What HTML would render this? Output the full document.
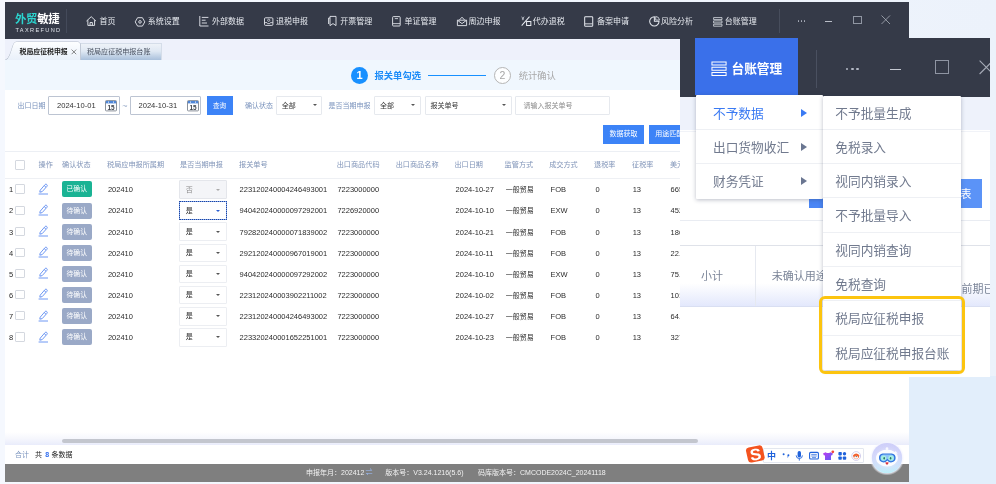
<!DOCTYPE html>
<html lang="zh-CN">
<head>
<meta charset="utf-8">
<title>外贸敏捷 TAXREFUND</title>
<style>
*{box-sizing:border-box;margin:0;padding:0}
html,body{width:996px;height:484px;overflow:hidden}
body{position:relative;background:#e2eefb;font-family:"Liberation Sans","Noto Sans CJK SC",sans-serif;color:#333}
.abs{position:absolute}
svg{overflow:visible}
#bgl{left:0;top:0;width:996px;height:484px;background:linear-gradient(90deg,#f5f8fe 0%,#f0f5fd 60%,#ecf2fb 100%)}
#bgr{left:909px;top:376px;width:87px;height:108px;background:#e2eefb}
#win{left:5px;top:2px;width:904px;height:479.8px;background:#fff;overflow:hidden}
#topbar{left:0;top:0;width:904px;height:37.5px;background:#353a48}
.nav{position:absolute;top:0;height:37px;line-height:40.4px;font-size:8px;color:#e6e9ef;white-space:nowrap}
.nav svg{position:absolute;top:13px}
#logo1{left:10px;top:10px;font-size:11.4px;font-weight:bold;line-height:14px;white-space:nowrap;letter-spacing:-0.3px}
#logo2{left:10.5px;top:24.5px;font-size:5.6px;color:#dfe3ea;letter-spacing:1.35px;line-height:7px;white-space:nowrap}
#tabbar{left:0;top:37px;width:904px;height:21px;background:#eef1fb}
#stepbar{left:0;top:57.5px;width:904px;height:30.5px;background:#f0f7fe}
.t7{font-size:7px;white-space:nowrap;line-height:10px}
.lbl{color:#7a93bd}
.inp{position:absolute;top:93.5px;height:19.5px;border:1px solid #e6e9ee;background:#fff;border-radius:1px;font-size:7.55px;line-height:17.8px;color:#333;white-space:nowrap}
.btn{position:absolute;background:#3c83f7;color:#fff;font-size:7px;text-align:center;white-space:nowrap}
.caret{position:absolute;width:0;height:0;border-left:2px solid transparent;border-right:2px solid transparent;border-top:2.6px solid #555}
.th{position:absolute;top:157.5px;font-size:7.15px;line-height:10px;color:#8094b8;white-space:nowrap}
.row{position:absolute;left:0;width:904px;height:21px}
.row span,.row div,.row svg{position:absolute;white-space:nowrap}
.cell{top:6.5px;font-size:7.5px;line-height:10px;color:#2b2b2b}
.cb{width:9.5px;height:9.5px;border:1px solid #d4d8df;background:#fff;border-radius:1px}
.tag{left:57px;top:2.6px;width:29.5px;height:16px;border-radius:2px;color:#fff;font-size:6.8px;line-height:16px;text-align:center}
.sel{left:174.3px;top:1.4px;width:47.7px;height:18.8px;border:1px solid #eceef2;background:#fff;border-radius:1px}
</style>
</head>
<body>
<div id="root" class="abs" style="left:0;top:0;width:996px;height:484px;will-change:transform">
<div id="bgl" class="abs"></div>
<div id="bgr" class="abs"></div>
<div id="win" class="abs">
  <div id="topbar" class="abs">
    <div id="logo1" class="abs"><span style="color:#2bd4cf">外贸</span><span style="color:#fff">敏捷</span></div>
    <div id="logo2" class="abs">TAXREFUND</div>
    <div class="abs" style="left:61px;top:7px;width:1px;height:24px;background:#444a5a"></div>
    <svg class="abs" style="left:81.4px;top:14.2px" width="11.6" height="11.6" viewBox="0 0 10 10"><path d="M0.4 4.4 L4.5 0.6 L8.6 4.4 M1.6 3.6 V8.1 H7.4 V3.6 M3.5 8.1 V5.6 H5.5 V8.1" fill="none" stroke="#e6e9ef" stroke-width="0.8"/></svg><div class="nav" style="left:94.6px">首页</div>
    <svg class="abs" style="left:130px;top:15px" width="10" height="10" viewBox="0 0 10 10"><path d="M2.6 0.7 H7.4 L9.8 4.9 L7.4 9.1 H2.6 L0.2 4.9 Z" fill="none" stroke="#e6e9ef" stroke-width="0.9" stroke-linejoin="round"/><circle cx="5" cy="4.9" r="1.3" fill="none" stroke="#e6e9ef" stroke-width="0.9"/></svg><div class="nav" style="left:142.8px">系统设置</div>
    <svg class="abs" style="left:194px;top:15px" width="10" height="10" viewBox="0 0 10 10"><path d="M0.8 -1 V9 H9.5 M2.8 0.4 H9.4 M2.8 3.2 H6.6 M2.8 6 H8" fill="none" stroke="#e6e9ef" stroke-width="0.9"/></svg><div class="nav" style="left:207px">外部数据</div>
    <svg class="abs" style="left:259px;top:15px" width="10" height="10" viewBox="0 0 10 10"><rect x="0.5" y="0.8" width="8.4" height="7.6" rx="1" fill="none" stroke="#e6e9ef" stroke-width="0.9"/><path d="M0.6 5.6 H3 L3.6 6.6 H5.8 L6.4 5.6 H8.8" fill="none" stroke="#e6e9ef" stroke-width="0.8"/><circle cx="4.7" cy="3.3" r="1.1" fill="none" stroke="#e6e9ef" stroke-width="0.7"/></svg><div class="nav" style="left:271px">退税申报</div>
    <svg class="abs" style="left:323px;top:15px" width="10" height="10" viewBox="0 0 10 10"><path d="M2 -0.6 H8 V8.6 L5 6.6 L2 8.6 Z M2 1 H0.6 V7" fill="none" stroke="#e6e9ef" stroke-width="0.9" stroke-linejoin="round"/></svg><div class="nav" style="left:335.2px">开票管理</div>
    <svg class="abs" style="left:388px;top:15px" width="10" height="10" viewBox="0 0 10 10"><rect x="-0.4" y="-0.4" width="7.6" height="9.4" rx="0.8" fill="none" stroke="#e6e9ef" stroke-width="0.9"/><path d="M-0.2 6.6 H7 M1.8 1.6 H5" fill="none" stroke="#e6e9ef" stroke-width="0.8"/></svg><div class="nav" style="left:399.5px">单证管理</div>
    <svg class="abs" style="left:451.5px;top:15px" width="10" height="10" viewBox="0 0 10 10"><path d="M0.4 3.2 H9.6 V8.6 H0.4 Z M0.6 3.4 L5 6.6 L9.4 3.4 M2.4 3 L5 0.2 L7.6 3" fill="none" stroke="#e6e9ef" stroke-width="0.9" stroke-linejoin="round"/></svg><div class="nav" style="left:463.5px">周边申报</div>
    <svg class="abs" style="left:515.6px;top:13.8px" width="11.2" height="11.2" viewBox="0 0 10 10"><path d="M0.6 8.6 L7.6 0.6 M5 8.6 H8.8 V5 H5 Z" fill="none" stroke="#e6e9ef" stroke-width="0.9"/><path d="M0.6 0.6 L1.7 2.2 L2.8 0.6 M1.7 2.2 V3.8 M0.8 2.6 H2.6" fill="none" stroke="#e6e9ef" stroke-width="0.6"/></svg><div class="nav" style="left:527.7px">代办退税</div>
    <svg class="abs" style="left:579.3000000000001px;top:13.8px" width="11.2" height="11.2" viewBox="0 0 10 10"><rect x="0.6" y="0.6" width="7.2" height="8.6" rx="0.8" fill="none" stroke="#e6e9ef" stroke-width="0.9"/><path d="M0.8 7 H7.6" stroke="#e6e9ef" stroke-width="0.8"/></svg><div class="nav" style="left:592px">备案申请</div>
    <svg class="abs" style="left:643.6px;top:13.8px" width="11.2" height="11.2" viewBox="0 0 10 10"><path d="M4.8 0.6 A4.2 4.2 0 1 0 9 4.8 H4.8 Z" fill="none" stroke="#e6e9ef" stroke-width="0.9"/><path d="M6 0.4 A3.6 3.6 0 0 1 9.4 3.6 H6 Z" fill="none" stroke="#e6e9ef" stroke-width="0.7"/></svg><div class="nav" style="left:656px">风险分析</div>
    <svg class="abs" style="left:707.5px;top:15px" width="10" height="10" viewBox="0 0 10 10"><path d="M0.6 0.6 H9 V2.6 H0.6 Z M0.6 3.9 H9 V5.9 H0.6 Z M0.6 7.2 H9 V9.2 H0.6 Z" fill="none" stroke="#e6e9ef" stroke-width="0.75"/></svg><div class="nav" style="left:719.7px">台账管理</div>
    <div class="abs" style="left:773.5px;top:7px;width:1px;height:24px;background:#474d5c"></div>
    <div class="abs" style="left:792.5px;top:18.3px;width:8px;height:2px"><i class="abs" style="left:0;top:0;width:1.4px;height:1.4px;background:#aeb3bf;border-radius:50%"></i><i class="abs" style="left:3px;top:0;width:1.4px;height:1.4px;background:#aeb3bf;border-radius:50%"></i><i class="abs" style="left:6px;top:0;width:1.4px;height:1.4px;background:#aeb3bf;border-radius:50%"></i></div>
    <div class="abs" style="left:819.7px;top:19.2px;width:7px;height:1px;background:#b9bdc7"></div>
    <div class="abs" style="left:848px;top:13.5px;width:8.6px;height:8.6px;border:1px solid #9096a3"></div>
    <svg class="abs" style="left:875.5px;top:13.3px" width="10" height="10" viewBox="0 0 10 10"><path d="M0.5 0.5 L9 9 M9 0.5 L0.5 9" stroke="#a9aeb9" stroke-width="0.8" fill="none"/></svg>
  </div>
  <div id="tabbar" class="abs">
    <div class="abs" style="left:75px;top:3.5px;width:82px;height:17.5px;background:linear-gradient(180deg,#eef2f8 0%,#dfe8f3 45%,#a9c0db 100%);border:1px solid #d5dde9;border-bottom:none"></div>
    <div class="abs t7" style="left:82px;top:7.5px;color:#4a5261;font-size:7.05px">税局应征税申报台账</div>
    <svg class="abs" style="left:0;top:2px" width="80" height="19" viewBox="0 0 80 19"><path d="M0.5 19 C5 17 6 10 8.5 3.5 C9.3 1.5 10.5 1 12.5 1 H72.5 C74 1 75 2 75 3.5 V19 Z" fill="#f2f6fc" stroke="#a5aebd" stroke-width="0.8"/><path d="M1 19 C5 17 6 10 8.5 3.5 C9.3 1.5 10.5 1 12.5 1 H72.5 C74 1 75 2 75 3.5 V19 Z" fill="url(#tg)" stroke="none"/><defs><linearGradient id="tg" x1="0" y1="0" x2="0" y2="1"><stop offset="0" stop-color="#fdfeff"/><stop offset="1" stop-color="#e9f0fa"/></linearGradient></defs></svg>
    <div class="abs t7" style="left:14.5px;top:7.5px;color:#222;font-weight:bold;font-size:6.9px">税局应征税申报</div>
    <svg class="abs" style="left:65.5px;top:9.5px" width="6" height="6" viewBox="0 0 6 6"><path d="M0.6 0.6 L5.2 5.2 M5.2 0.6 L0.6 5.2" stroke="#555" stroke-width="0.7"/></svg>
  </div>
  <div id="stepbar" class="abs">
    <div class="abs" style="left:346px;top:7px;width:17px;height:17px;border-radius:50%;background:#1890ff;color:#fff;font-size:11px;font-weight:bold;line-height:17.5px;text-align:center">1</div>
    <div class="abs" style="left:369.5px;top:10.3px;font-size:9.3px;line-height:13px;font-weight:bold;color:#1d8cf8;white-space:nowrap">报关单勾选</div>
    <div class="abs" style="left:423px;top:15px;width:57.5px;height:1px;background:#1890ff"></div>
    <div class="abs" style="left:489px;top:7px;width:17px;height:17px;border-radius:50%;border:1px solid #b5b5b5;color:#a5a5a5;font-size:10.5px;line-height:15.5px;text-align:center;background:#fdfeff">2</div>
    <div class="abs" style="left:513.7px;top:10.3px;font-size:9.3px;line-height:13px;color:#a8a8a8;white-space:nowrap">统计确认</div>
  </div>
  <div class="abs t7 lbl" style="left:12.4px;top:99.4px">出口日期</div>
  <div class="inp" style="left:43px;width:71.5px;border-color:#bcc4d2"><span class="abs" style="left:8px;top:0">2024-10-01</span><svg class="abs" style="left:55.6px;top:3.2px" width="12" height="11.4" viewBox="0 0 12 11.4"><rect x="0.5" y="0.6" width="11" height="10.3" rx="0.8" fill="#fff" stroke="#7d848f" stroke-width="0.9"/><rect x="0.9" y="1" width="10.2" height="2.4" fill="#4f86d6"/><rect x="3" y="1.6" width="1" height="1" fill="#fff"/><rect x="8" y="1.6" width="1" height="1" fill="#fff"/><text x="6" y="9.6" font-size="6.4" font-weight="bold" text-anchor="middle" fill="#3a3f47" font-family="Liberation Sans, sans-serif">15</text></svg></div>
  <div class="abs" style="left:117.3px;top:98.6px;font-size:9px;line-height:10px;color:#9fb0cc">~</div>
  <div class="inp" style="left:125px;width:71px;border-color:#bcc4d2"><span class="abs" style="left:7.5px;top:0">2024-10-31</span><svg class="abs" style="left:55.6px;top:3.2px" width="12" height="11.4" viewBox="0 0 12 11.4"><rect x="0.5" y="0.6" width="11" height="10.3" rx="0.8" fill="#fff" stroke="#7d848f" stroke-width="0.9"/><rect x="0.9" y="1" width="10.2" height="2.4" fill="#4f86d6"/><rect x="3" y="1.6" width="1" height="1" fill="#fff"/><rect x="8" y="1.6" width="1" height="1" fill="#fff"/><text x="6" y="9.6" font-size="6.4" font-weight="bold" text-anchor="middle" fill="#3a3f47" font-family="Liberation Sans, sans-serif">15</text></svg></div>
  <div class="btn" style="left:201.6px;top:93.5px;width:26px;height:19.5px;line-height:19.5px;font-size:6.6px">查询</div>
  <div class="abs t7 lbl" style="left:240px;top:99.4px">确认状态</div>
  <div class="inp" style="left:270.8px;width:46.7px"><span class="abs" style="left:5px;top:0;font-size:7px">全部</span><i class="caret" style="left:36px;top:7.5px"></i></div>
  <div class="abs t7 lbl" style="left:323.5px;top:99.4px">是否当期申报</div>
  <div class="inp" style="left:369px;width:47px"><span class="abs" style="left:5px;top:0;font-size:7px">全部</span><i class="caret" style="left:36px;top:7.5px"></i></div>
  <div class="inp" style="left:419.5px;width:87px"><span class="abs" style="left:5px;top:0;font-size:7px">报关单号</span><i class="caret" style="left:76.5px;top:7.5px"></i></div>
  <div class="inp" style="left:510px;width:94.5px"><span class="abs" style="left:7.5px;top:0;font-size:7px;color:#8b8b8b">请输入报关单号</span></div>
  <div class="btn" style="left:598.4px;top:123.3px;width:40.2px;height:18.6px;line-height:18.6px">数据获取</div>
  <div class="btn" style="left:644.1px;top:123.3px;width:40.2px;height:18.6px;line-height:18.6px">用途匹配</div>
  <div class="abs" style="left:0;top:148.5px;width:904px;height:1px;background:#eceff4"></div>
  <div class="abs" style="left:0;top:175.6px;width:904px;height:1px;background:#eef0f4"></div>
  <div class="abs cb" style="left:10.2px;top:158.2px"></div>
  <div class="th" style="left:33.6px">操作</div>
  <div class="th" style="left:57px">确认状态</div>
  <div class="th" style="left:102px">税局应申报所属期</div>
  <div class="th" style="left:175px">是否当期申报</div>
  <div class="th" style="left:234px">报关单号</div>
  <div class="th" style="left:331.7px">出口商品代码</div>
  <div class="th" style="left:390.7px">出口商品名称</div>
  <div class="th" style="left:449.4px">出口日期</div>
  <div class="th" style="left:499.6px">监管方式</div>
  <div class="th" style="left:544.2px">成交方式</div>
  <div class="th" style="left:589px">退税率</div>
  <div class="th" style="left:627px">征税率</div>
  <div class="th" style="left:664.9px">美元离岸价</div>
  <div class="row" style="top:176.90px"><span class="cell" style="left:4px">1</span><div class="cb" style="left:10.2px;top:5.6px"></div><svg style="left:33.4px;top:4.2px" width="11" height="12" viewBox="0 0 11 12"><path d="M2.2 7.2 L7 1.6 C7.6 1 8.6 1.2 9 1.8 C9.4 2.4 9.3 3 8.8 3.5 L4.2 8.6 L1.8 9.2 Z M6.2 2.6 L8 4.2" fill="none" stroke="#4a7df0" stroke-width="0.8" stroke-linejoin="round"/><path d="M0.6 11 H10" stroke="#4a7df0" stroke-width="0.8"/></svg><div class="tag" style="background:#1ab394">已确认</div><span class="cell" style="left:102.9px">202410</span><div class="sel" style="background:#f4f5f8;border-color:#e4e6eb;"><span class="abs" style="left:5.5px;top:3.6px;font-size:7px;line-height:10px;color:#8a8a8a">否</span><i class="caret" style="left:36px;top:7.4px;border-top-color:#aaa"></i></div><span class="cell" style="left:234.6px">223120240004246493001</span><span class="cell" style="left:332.4px">7223000000</span><span class="cell" style="left:450.6px">2024-10-27</span><span class="cell" style="left:500.7px;font-size:7px">一般贸易</span><span class="cell" style="left:545.6px">FOB</span><span class="cell" style="left:590.6px">0</span><span class="cell" style="left:627.7px">13</span><span class="cell" style="left:665.6px">665.20</span></div>
  <div class="row" style="top:197.98px"><span class="cell" style="left:4px">2</span><div class="cb" style="left:10.2px;top:5.6px"></div><svg style="left:33.4px;top:4.2px" width="11" height="12" viewBox="0 0 11 12"><path d="M2.2 7.2 L7 1.6 C7.6 1 8.6 1.2 9 1.8 C9.4 2.4 9.3 3 8.8 3.5 L4.2 8.6 L1.8 9.2 Z M6.2 2.6 L8 4.2" fill="none" stroke="#4a7df0" stroke-width="0.8" stroke-linejoin="round"/><path d="M0.6 11 H10" stroke="#4a7df0" stroke-width="0.8"/></svg><div class="tag" style="background:#9aa9c7">待确认</div><span class="cell" style="left:102.9px">202410</span><div class="sel" style="border:1px solid #7fa4ee;outline:1px dotted #1f459a;outline-offset:-1px;"><span class="abs" style="left:5.5px;top:3.6px;font-size:7px;line-height:10px;color:#2b2b2b">是</span><i class="caret" style="left:36px;top:7.4px;border-top-color:#2b5fd0"></i></div><span class="cell" style="left:234.6px">940420240000097292001</span><span class="cell" style="left:332.4px">7226920000</span><span class="cell" style="left:450.6px">2024-10-10</span><span class="cell" style="left:500.7px;font-size:7px">一般贸易</span><span class="cell" style="left:545.6px">EXW</span><span class="cell" style="left:590.6px">0</span><span class="cell" style="left:627.7px">13</span><span class="cell" style="left:665.6px">452.10</span></div>
  <div class="row" style="top:219.06px"><span class="cell" style="left:4px">3</span><div class="cb" style="left:10.2px;top:5.6px"></div><svg style="left:33.4px;top:4.2px" width="11" height="12" viewBox="0 0 11 12"><path d="M2.2 7.2 L7 1.6 C7.6 1 8.6 1.2 9 1.8 C9.4 2.4 9.3 3 8.8 3.5 L4.2 8.6 L1.8 9.2 Z M6.2 2.6 L8 4.2" fill="none" stroke="#4a7df0" stroke-width="0.8" stroke-linejoin="round"/><path d="M0.6 11 H10" stroke="#4a7df0" stroke-width="0.8"/></svg><div class="tag" style="background:#9aa9c7">待确认</div><span class="cell" style="left:102.9px">202410</span><div class="sel" style=""><span class="abs" style="left:5.5px;top:3.6px;font-size:7px;line-height:10px;color:#2b2b2b">是</span><i class="caret" style="left:36px;top:7.4px;border-top-color:#555"></i></div><span class="cell" style="left:234.6px">792820240000071839002</span><span class="cell" style="left:332.4px">7223000000</span><span class="cell" style="left:450.6px">2024-10-21</span><span class="cell" style="left:500.7px;font-size:7px">一般贸易</span><span class="cell" style="left:545.6px">FOB</span><span class="cell" style="left:590.6px">0</span><span class="cell" style="left:627.7px">13</span><span class="cell" style="left:665.6px">186.30</span></div>
  <div class="row" style="top:240.14px"><span class="cell" style="left:4px">4</span><div class="cb" style="left:10.2px;top:5.6px"></div><svg style="left:33.4px;top:4.2px" width="11" height="12" viewBox="0 0 11 12"><path d="M2.2 7.2 L7 1.6 C7.6 1 8.6 1.2 9 1.8 C9.4 2.4 9.3 3 8.8 3.5 L4.2 8.6 L1.8 9.2 Z M6.2 2.6 L8 4.2" fill="none" stroke="#4a7df0" stroke-width="0.8" stroke-linejoin="round"/><path d="M0.6 11 H10" stroke="#4a7df0" stroke-width="0.8"/></svg><div class="tag" style="background:#9aa9c7">待确认</div><span class="cell" style="left:102.9px">202410</span><div class="sel" style=""><span class="abs" style="left:5.5px;top:3.6px;font-size:7px;line-height:10px;color:#2b2b2b">是</span><i class="caret" style="left:36px;top:7.4px;border-top-color:#555"></i></div><span class="cell" style="left:234.6px">292120240000967019001</span><span class="cell" style="left:332.4px">7223000000</span><span class="cell" style="left:450.6px">2024-10-11</span><span class="cell" style="left:500.7px;font-size:7px">一般贸易</span><span class="cell" style="left:545.6px">FOB</span><span class="cell" style="left:590.6px">0</span><span class="cell" style="left:627.7px">13</span><span class="cell" style="left:665.6px">22.50</span></div>
  <div class="row" style="top:261.22px"><span class="cell" style="left:4px">5</span><div class="cb" style="left:10.2px;top:5.6px"></div><svg style="left:33.4px;top:4.2px" width="11" height="12" viewBox="0 0 11 12"><path d="M2.2 7.2 L7 1.6 C7.6 1 8.6 1.2 9 1.8 C9.4 2.4 9.3 3 8.8 3.5 L4.2 8.6 L1.8 9.2 Z M6.2 2.6 L8 4.2" fill="none" stroke="#4a7df0" stroke-width="0.8" stroke-linejoin="round"/><path d="M0.6 11 H10" stroke="#4a7df0" stroke-width="0.8"/></svg><div class="tag" style="background:#9aa9c7">待确认</div><span class="cell" style="left:102.9px">202410</span><div class="sel" style=""><span class="abs" style="left:5.5px;top:3.6px;font-size:7px;line-height:10px;color:#2b2b2b">是</span><i class="caret" style="left:36px;top:7.4px;border-top-color:#555"></i></div><span class="cell" style="left:234.6px">940420240000097292002</span><span class="cell" style="left:332.4px">7223000000</span><span class="cell" style="left:450.6px">2024-10-10</span><span class="cell" style="left:500.7px;font-size:7px">一般贸易</span><span class="cell" style="left:545.6px">EXW</span><span class="cell" style="left:590.6px">0</span><span class="cell" style="left:627.7px">13</span><span class="cell" style="left:665.6px">75.60</span></div>
  <div class="row" style="top:282.30px"><span class="cell" style="left:4px">6</span><div class="cb" style="left:10.2px;top:5.6px"></div><svg style="left:33.4px;top:4.2px" width="11" height="12" viewBox="0 0 11 12"><path d="M2.2 7.2 L7 1.6 C7.6 1 8.6 1.2 9 1.8 C9.4 2.4 9.3 3 8.8 3.5 L4.2 8.6 L1.8 9.2 Z M6.2 2.6 L8 4.2" fill="none" stroke="#4a7df0" stroke-width="0.8" stroke-linejoin="round"/><path d="M0.6 11 H10" stroke="#4a7df0" stroke-width="0.8"/></svg><div class="tag" style="background:#9aa9c7">待确认</div><span class="cell" style="left:102.9px">202410</span><div class="sel" style=""><span class="abs" style="left:5.5px;top:3.6px;font-size:7px;line-height:10px;color:#2b2b2b">是</span><i class="caret" style="left:36px;top:7.4px;border-top-color:#555"></i></div><span class="cell" style="left:234.6px">223120240003902211002</span><span class="cell" style="left:332.4px">7223000000</span><span class="cell" style="left:450.6px">2024-10-02</span><span class="cell" style="left:500.7px;font-size:7px">一般贸易</span><span class="cell" style="left:545.6px">FOB</span><span class="cell" style="left:590.6px">0</span><span class="cell" style="left:627.7px">13</span><span class="cell" style="left:665.6px">101.00</span></div>
  <div class="row" style="top:303.38px"><span class="cell" style="left:4px">7</span><div class="cb" style="left:10.2px;top:5.6px"></div><svg style="left:33.4px;top:4.2px" width="11" height="12" viewBox="0 0 11 12"><path d="M2.2 7.2 L7 1.6 C7.6 1 8.6 1.2 9 1.8 C9.4 2.4 9.3 3 8.8 3.5 L4.2 8.6 L1.8 9.2 Z M6.2 2.6 L8 4.2" fill="none" stroke="#4a7df0" stroke-width="0.8" stroke-linejoin="round"/><path d="M0.6 11 H10" stroke="#4a7df0" stroke-width="0.8"/></svg><div class="tag" style="background:#9aa9c7">待确认</div><span class="cell" style="left:102.9px">202410</span><div class="sel" style=""><span class="abs" style="left:5.5px;top:3.6px;font-size:7px;line-height:10px;color:#2b2b2b">是</span><i class="caret" style="left:36px;top:7.4px;border-top-color:#555"></i></div><span class="cell" style="left:234.6px">223120240004246493002</span><span class="cell" style="left:332.4px">7223000000</span><span class="cell" style="left:450.6px">2024-10-27</span><span class="cell" style="left:500.7px;font-size:7px">一般贸易</span><span class="cell" style="left:545.6px">FOB</span><span class="cell" style="left:590.6px">0</span><span class="cell" style="left:627.7px">13</span><span class="cell" style="left:665.6px">64.80</span></div>
  <div class="row" style="top:324.46px"><span class="cell" style="left:4px">8</span><div class="cb" style="left:10.2px;top:5.6px"></div><svg style="left:33.4px;top:4.2px" width="11" height="12" viewBox="0 0 11 12"><path d="M2.2 7.2 L7 1.6 C7.6 1 8.6 1.2 9 1.8 C9.4 2.4 9.3 3 8.8 3.5 L4.2 8.6 L1.8 9.2 Z M6.2 2.6 L8 4.2" fill="none" stroke="#4a7df0" stroke-width="0.8" stroke-linejoin="round"/><path d="M0.6 11 H10" stroke="#4a7df0" stroke-width="0.8"/></svg><div class="tag" style="background:#9aa9c7">待确认</div><span class="cell" style="left:102.9px">202410</span><div class="sel" style=""><span class="abs" style="left:5.5px;top:3.6px;font-size:7px;line-height:10px;color:#2b2b2b">是</span><i class="caret" style="left:36px;top:7.4px;border-top-color:#555"></i></div><span class="cell" style="left:234.6px">223320240001652251001</span><span class="cell" style="left:332.4px">7223000000</span><span class="cell" style="left:450.6px">2024-10-23</span><span class="cell" style="left:500.7px;font-size:7px">一般贸易</span><span class="cell" style="left:545.6px">FOB</span><span class="cell" style="left:590.6px">0</span><span class="cell" style="left:627.7px">13</span><span class="cell" style="left:665.6px">327.00</span></div>
  <div class="abs" style="left:0;top:430px;width:904px;height:12.6px;background:linear-gradient(180deg,#fff 0%,#f6f7fd 50%,#e9ecfb 100%)"></div>
  <div class="abs" style="left:57px;top:436.5px;width:635.5px;height:4.8px;background:#c3c6ce;border-radius:2.4px"></div>
  <div class="abs t7" style="left:9.9px;top:447.5px;color:#7a93bd">合计</div>
  <div class="abs t7" style="left:30px;top:447.5px;color:#222">共</div><div class="abs t7" style="left:40.2px;top:447.5px;color:#2f6df0;font-weight:bold">8</div><div class="abs t7" style="left:46.4px;top:447.5px;color:#222">条数据</div>
  <div class="abs" style="left:0;top:462.4px;width:904px;height:17.4px;background:#7f7f7f"></div>
  <div class="abs t7" style="left:301px;top:465.6px;color:#f2f2f2">申报年月：202412</div><div class="abs t7" style="left:360.5px;top:465.2px;color:#9ec1ff">⇌</div><div class="abs t7" style="left:380.3px;top:465.6px;color:#f2f2f2">版本号：V3.24.1216(5.6)</div><div class="abs t7" style="left:473px;top:465.6px;color:#f2f2f2">码库版本号：CMCODE2024C_20241118</div>
  <div class="abs" style="left:757.5px;top:446.3px;width:101.5px;height:14.8px;background:#fff;border:1px solid #e3e7ef;border-radius:1px"></div>
  <svg class="abs" style="left:738.6px;top:442px" width="24.2" height="21" viewBox="0 0 22 20" preserveAspectRatio="none"><rect x="2.6" y="2.2" width="15.4" height="14.6" rx="3" fill="#f4531f" transform="rotate(-12 10.3 9.5)"/><text x="10.4" y="15.2" font-size="15.5" font-weight="bold" text-anchor="middle" fill="#fff" font-family="Liberation Sans, sans-serif" transform="rotate(-8 10.3 9.5)">S</text></svg>
  <div class="abs" style="left:762px;top:447.8px;font-size:9px;line-height:12px;font-weight:bold;color:#1f62db">中</div>
  <svg class="abs" style="left:777px;top:448px" width="90" height="12" viewBox="0 0 90 12"><circle cx="1.6" cy="4.2" r="1" fill="#1f62db"/><path d="M5.4 5.2 a1 1 0 1 1 1 1 q0 1.2 -1 1.8 q.5 -.8 0 -2.8z" fill="#1f62db"/><rect x="15.6" y="1" width="3.4" height="6.4" rx="1.7" fill="#1f62db"/><path d="M14.2 5.4 a3.1 3.1 0 0 0 6.2 0 M17.3 8.6 V10.6" fill="none" stroke="#1f62db" stroke-width="0.9"/><rect x="27.6" y="2.4" width="8.8" height="6.6" rx="1" fill="none" stroke="#1f62db" stroke-width="1.1"/><path d="M29.2 4.4 H34.8 M29.2 6 H34.8 M30 7.6 H34" stroke="#1f62db" stroke-width="0.7"/><path d="M41 3.4 L43.6 2.2 Q46 4 48.4 2.2 L51 3.4 L50 5.6 L49 5.2 V10 H43 V5.2 L42 5.6 Z" fill="url(#shirt)"/><circle cx="50.8" cy="1.8" r="1.4" fill="#f0483e"/><rect x="56.4" y="2" width="3.4" height="3.4" rx="0.8" fill="#1f62db"/><rect x="60.8" y="2" width="3.4" height="3.4" rx="1.7" fill="#1f62db"/><rect x="56.4" y="6.4" width="3.4" height="3.4" rx="0.8" fill="#1f62db"/><rect x="60.8" y="6.4" width="3.4" height="3.4" rx="0.8" fill="#1f62db"/><circle cx="74.2" cy="6" r="4.4" fill="#fff" stroke="#c9c4e8" stroke-width="0.8"/><path d="M71 5.2 Q74.2 1.6 77.4 5.2 Q77 8.8 74.2 9.2 Q71.4 8.8 71 5.2Z" fill="#f2622e"/><ellipse cx="74.2" cy="7.2" rx="1.8" ry="1.5" fill="#fff"/><circle cx="74.2" cy="6.6" r="0.6" fill="#333"/><defs><linearGradient id="shirt" x1="0" y1="0" x2="1" y2="1"><stop offset="0" stop-color="#c13cf0"/><stop offset="1" stop-color="#5b5df5"/></linearGradient></defs></svg>
  <svg class="abs" style="left:864.2px;top:438.2px" width="36" height="36" viewBox="-2 -2 36 36"><defs><linearGradient id="rb" x1="0" y1="0" x2="0" y2="1"><stop offset="0" stop-color="#cdcdf9"/><stop offset="0.45" stop-color="#d3d7fb"/><stop offset="0.8" stop-color="#cde4fb"/><stop offset="1" stop-color="#bdf0fa"/></linearGradient><radialGradient id="rb2" cx="0.5" cy="0.5" r="0.5"><stop offset="0" stop-color="#fff" stop-opacity="0.55"/><stop offset="0.75" stop-color="#fff" stop-opacity="0.05"/><stop offset="1" stop-color="#fff" stop-opacity="0"/></radialGradient><radialGradient id="rglow" cx="0.5" cy="0.5" r="0.5"><stop offset="0.85" stop-color="#f1f2fe" stop-opacity="0.95"/><stop offset="1" stop-color="#f6f7ff" stop-opacity="0"/></radialGradient></defs><circle cx="16" cy="16" r="17.5" fill="url(#rglow)"/><circle cx="16" cy="16" r="15.1" fill="url(#rb)"/><circle cx="16" cy="16" r="15.1" fill="url(#rb2)"/><path d="M16 6.2 V8.6" stroke="#f4f5ff" stroke-width="1.4"/><circle cx="16" cy="6.6" r="1.3" fill="#f7f8ff"/><path d="M24.6 8.8 L26.8 11.8 L23.2 11.6 Z" fill="#f7f8ff"/><ellipse cx="16" cy="16" rx="11" ry="8.6" fill="#fbfcff"/><path d="M8 15.8 C8 12.6 10.2 11.4 12.6 11.4 H19.6 C22.4 11.4 24.6 12.6 24.6 15.8 C24.6 19.2 22 20.4 20 20.4 C18.4 20.4 17.4 19.6 16.3 18.4 C15.2 19.6 14.2 20.4 12.6 20.4 C10.6 20.4 8 19.2 8 15.8 Z" fill="#2f74de"/><path d="M9.4 15.8 C9.4 13.4 11 12.6 12.8 12.6 H19.6 C21.6 12.6 23.2 13.4 23.2 15.8 C23.2 18.4 21.4 19.2 20 19.2 C18.6 19.2 17.6 18.2 16.3 16.8 C15 18.2 14 19.2 12.6 19.2 C11.2 19.2 9.4 18.4 9.4 15.8 Z" fill="#8ec4f7"/><ellipse cx="12.6" cy="16" rx="2.7" ry="2.5" fill="#a4f1e2"/><ellipse cx="20" cy="16" rx="2.7" ry="2.5" fill="#a4f1e2"/><ellipse cx="13.2" cy="16.2" rx="0.8" ry="1.2" fill="#2f7466"/><ellipse cx="19.6" cy="16.2" rx="0.8" ry="1.2" fill="#2f7466"/><path d="M14.2 20.6 Q16 20 17.8 20.6 Q16.8 22.8 16 22.8 Q15.2 22.8 14.2 20.6 Z" fill="#d8323c"/></svg>
</div>

<div id="ov" class="abs" style="left:680px;top:38px;width:310px;height:338.5px;background:#fff;overflow:hidden">
  <div class="abs" style="left:0;top:0;width:310px;height:59.4px;background:#353a48"></div>
  <div class="abs" style="left:0;top:59px;width:310px;height:33px;background:#eef2fb"></div>
  <div class="abs" style="left:15px;top:0;width:103px;height:57px;background:#3a70ea"></div>
  <svg class="abs" style="left:30.5px;top:23.3px" width="16.5" height="15.5" viewBox="0 0 18 17"><path d="M1 1 H16.5 V4.4 H1 Z M1 6.8 H16.5 V10.2 H1 Z M1 12.6 H16.5 V16 H1 Z" fill="none" stroke="#fff" stroke-width="1.1"/></svg>
  <div class="abs" style="left:51.5px;top:22px;font-size:12.7px;line-height:18px;font-weight:bold;color:#fff;white-space:nowrap">台账管理</div>
  <div class="abs" style="left:136px;top:11.5px;width:1px;height:38px;background:#4a5060"></div>
  <div class="abs" style="left:165.5px;top:29.7px;width:15px;height:3px"><i class="abs" style="left:0;top:0;width:2.7px;height:2.7px;background:#b3b8c4;border-radius:50%"></i><i class="abs" style="left:5.4px;top:0;width:2.7px;height:2.7px;background:#b3b8c4;border-radius:50%"></i><i class="abs" style="left:10.8px;top:0;width:2.7px;height:2.7px;background:#b3b8c4;border-radius:50%"></i></div>
  <div class="abs" style="left:210px;top:30.5px;width:10.5px;height:1.3px;background:#c5c9d2"></div>
  <div class="abs" style="left:254.7px;top:21.7px;width:14px;height:14px;border:1.2px solid #8f95a3"></div>
  <svg class="abs" style="left:298.5px;top:21.5px" width="16" height="15" viewBox="0 0 16 15"><path d="M0.6 0.6 L14 14 M14 0.6 L0.6 14" stroke="#a5aab6" stroke-width="1.1" fill="none"/></svg>
  
  <div class="abs" style="left:0;top:92.5px;width:310px;height:1px;background:#f1f3f8"></div>
  <div class="abs" style="left:0;top:181.5px;width:310px;height:1px;background:#e9ecf2"></div>
  <div class="abs" style="left:0;top:207.5px;width:310px;height:60.5px;background:linear-gradient(180deg,#fff 0%,#fff 62%,#e3e8fc 100%)"></div>
  <div class="abs" style="left:0;top:207px;width:310px;height:1px;background:#dfe2e9"></div>
  <div class="abs" style="left:0;top:267.6px;width:310px;height:1px;background:#d9dff2"></div>
  <div class="abs" style="left:75px;top:207.5px;width:1px;height:60.5px;background:#e6e9f0"></div>
  <div class="abs" style="left:20.9px;top:229.7px;font-size:11px;line-height:16px;color:#7b8598;white-space:nowrap">小计</div>
  <div class="abs" style="left:91.8px;top:229.7px;font-size:11px;line-height:16px;color:#7b8598;white-space:nowrap">未确认用途</div>
  <div class="abs" style="left:281.5px;top:242.7px;font-size:11px;line-height:16px;color:#7b8598;white-space:nowrap">前期已</div>
  <div class="abs" style="left:129px;top:140.6px;width:30px;height:29.6px;background:#4a86f5"></div>
  <div class="abs" style="left:262px;top:140.6px;width:39.5px;height:29.6px;background:#5b93f7;color:#fff;font-size:11px;line-height:30px;white-space:nowrap;padding-left:7.5px">报表</div>
</div>
<div class="abs" style="left:695.5px;top:94.8px;padding-top:0.8px;padding-bottom:0.6px;width:127.5px;background:#fff;box-shadow:0 1px 4px rgba(40,50,80,.32);border-radius:1px"><div style="position:relative;height:34.3px;border-bottom:1px solid #eef0f4;padding-left:17.5px;font-size:12.7px;line-height:37.8px;color:#3a7af3;white-space:nowrap">不予数据<i class="abs" style="right:16.5px;top:13.2px;width:0;height:0;border-top:4px solid transparent;border-bottom:4px solid transparent;border-left:6.8px solid #3a7af3"></i></div><div style="position:relative;height:34.3px;border-bottom:1px solid #eef0f4;padding-left:17.5px;font-size:12.7px;line-height:37.8px;color:#717a8e;white-space:nowrap">出口货物收汇<i class="abs" style="right:16.5px;top:13.2px;width:0;height:0;border-top:4px solid transparent;border-bottom:4px solid transparent;border-left:6.8px solid #6a7691"></i></div><div style="position:relative;height:34.3px;padding-left:17.5px;font-size:12.7px;line-height:37.8px;color:#717a8e;white-space:nowrap">财务凭证<i class="abs" style="right:16.5px;top:13.2px;width:0;height:0;border-top:4px solid transparent;border-bottom:4px solid transparent;border-left:6.8px solid #6a7691"></i></div></div>
<div class="abs" style="left:823.3px;top:95.6px;padding-top:0;width:137.5px;background:#fff;box-shadow:0 1px 4px rgba(40,50,80,.32);border-radius:1px"><div style="position:relative;height:34.3px;border-bottom:1px solid #eef0f4;padding-left:12px;font-size:12.7px;line-height:37.8px;color:#717a8e;white-space:nowrap">不予批量生成</div><div style="position:relative;height:34.3px;border-bottom:1px solid #eef0f4;padding-left:12px;font-size:12.7px;line-height:37.8px;color:#717a8e;white-space:nowrap">免税录入</div><div style="position:relative;height:34.3px;border-bottom:1px solid #eef0f4;padding-left:12px;font-size:12.7px;line-height:37.8px;color:#717a8e;white-space:nowrap">视同内销录入</div><div style="position:relative;height:34.3px;border-bottom:1px solid #eef0f4;padding-left:12px;font-size:12.7px;line-height:37.8px;color:#717a8e;white-space:nowrap">不予批量导入</div><div style="position:relative;height:34.3px;border-bottom:1px solid #eef0f4;padding-left:12px;font-size:12.7px;line-height:37.8px;color:#717a8e;white-space:nowrap">视同内销查询</div><div style="position:relative;height:34.3px;border-bottom:1px solid #eef0f4;padding-left:12px;font-size:12.7px;line-height:37.8px;color:#717a8e;white-space:nowrap">免税查询</div><div style="position:relative;height:34.3px;border-bottom:1px solid #eef0f4;padding-left:12px;font-size:12.7px;line-height:37.8px;color:#717a8e;white-space:nowrap">税局应征税申报</div><div style="position:relative;height:34.3px;padding-left:12px;font-size:12.7px;line-height:37.8px;color:#717a8e;white-space:nowrap">税局应征税申报台账</div></div>
<div class="abs" style="left:819px;top:296.3px;width:145.5px;height:77.6px;border:3.2px solid #fcc40f;border-radius:6px"></div>
</div>
</body>
</html>
